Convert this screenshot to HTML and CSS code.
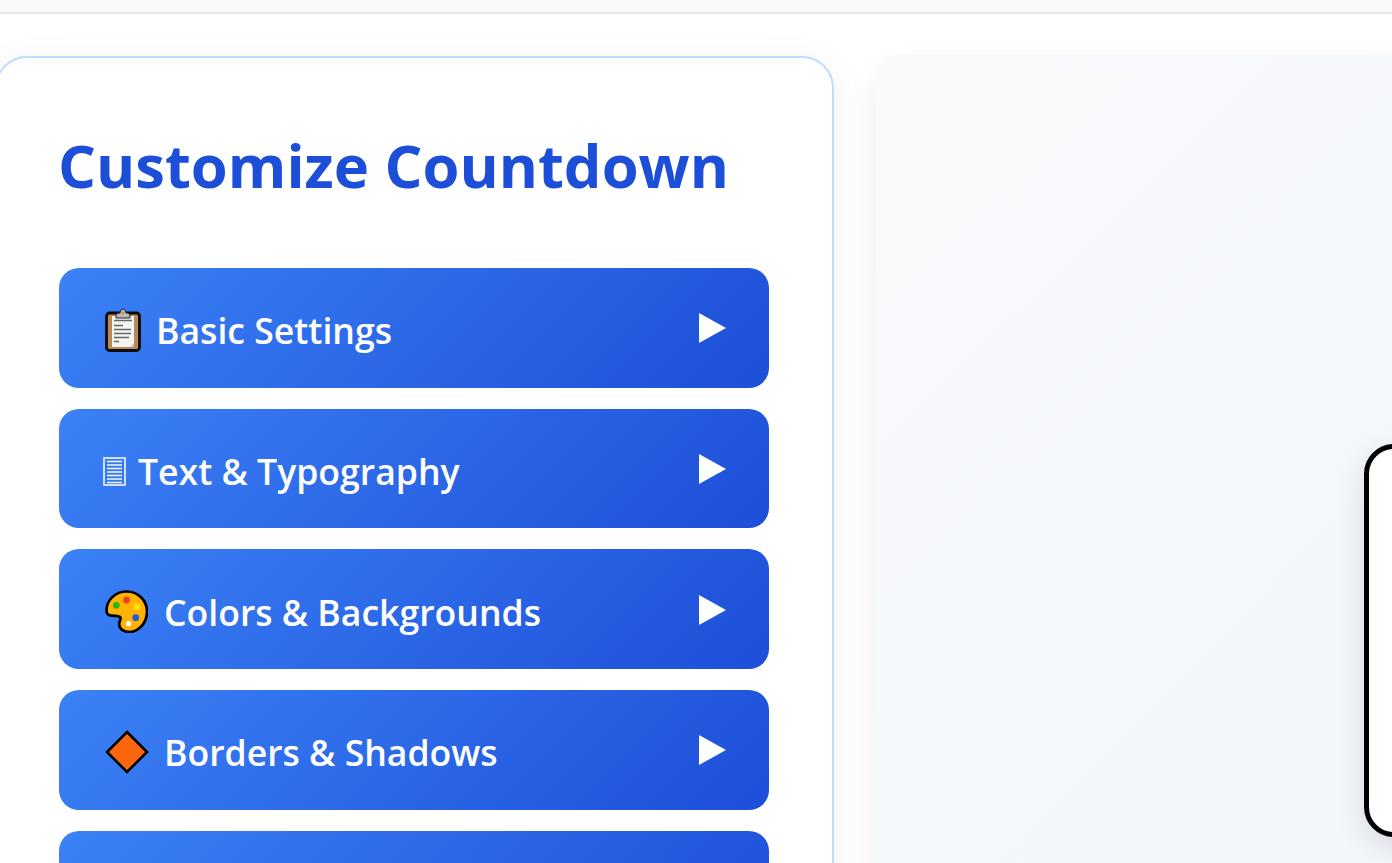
FILE: index.html
```html
<!DOCTYPE html>
<html lang="en">
<head>
<meta charset="utf-8">
<title>Customize Countdown</title>
<link rel="stylesheet" href="styles.css">
</head>
<body>
<div class="topbar"></div>
<main class="layout">
  <section class="panel">
    <h1 class="title">Customize Countdown</h1>
    <div class="accordion">
      <button class="acc">
        <span class="acc-label">
          <svg class="ic ic-clip" viewBox="0 0 36 44"><rect x="1.500" y="5" width="33" height="37.500" rx="3" fill="#b88a5a" stroke="#0a0a0a" stroke-width="2.800"/><rect x="7" y="8" width="22" height="31" fill="#f4f4f2"/><path d="M29 39v-4l-4 4z" fill="#c9c9c9"/><path d="M11 8c0-2.500 2-3 4-3 .5-2.500 1.500-4 3-4s2.500 1.500 3 4c2 0 4 .5 4 3v2H11z" fill="#b9b9b9" stroke="#222" stroke-width="1"/><circle cx="18" cy="5" r="1.300" fill="#d08a4a"/><path d="M9 12.500h18M9 17.500h9M9 21.500h17M9 25.500h17M9 29.500h15M9 33.500h5" stroke="#666" stroke-width="1.700" fill="none"/></svg>
          Basic Settings
        </span>
        <svg class="arrow" viewBox="0 0 27 30"><polygon points="0,0 27,15 0,30"/></svg>
      </button>
      <button class="acc">
        <span class="acc-label label-tight">
          <svg class="ic ic-doc" viewBox="0 0 23 29"><rect x="1" y="1" width="21" height="27" fill="none" stroke="#dfe9fc" stroke-width="1.800"/><path d="M4 4.500h15M4 8h15M4 11.500h15M4 15h15M4 18.500h15M4 22h15M4 25.500h15" stroke="#f2f6fe" stroke-width="1.700"/></svg>
          Text &amp; Typography
        </span>
        <svg class="arrow" viewBox="0 0 27 30"><polygon points="0,0 27,15 0,30"/></svg>
      </button>
      <button class="acc">
        <span class="acc-label label-pal">
          <svg class="ic ic-pal" viewBox="0 0 42 42"><path d="M21 1.500C32 1.500 41 10 41 21 41 32 33 41 24 41 17 41 13 37 14 32 15 28 17 26 12 25.500 6 25 1.500 25.500 1.500 20 1.500 10 10 1.500 21 1.500z" fill="#ffb300" stroke="#000" stroke-width="2.600"/><circle cx="11" cy="15" r="3.300" fill="#2fb314"/><circle cx="21" cy="10" r="3.300" fill="#f0401f"/><circle cx="31" cy="16.500" r="3.300" fill="#ffe000"/><circle cx="30" cy="27" r="3.300" fill="#1f5be0"/><circle cx="23" cy="33" r="2.600" fill="#fff"/></svg>
          Colors &amp; Backgrounds
        </span>
        <svg class="arrow" viewBox="0 0 27 30"><polygon points="0,0 27,15 0,30"/></svg>
      </button>
      <button class="acc">
        <span class="acc-label">
          <svg class="ic ic-dia" viewBox="0 0 44 44"><polygon points="22,2 42,22 22,42 2,22" fill="#fb660f" stroke="#000" stroke-width="2.600"/></svg>
          Borders &amp; Shadows
        </span>
        <svg class="arrow" viewBox="0 0 27 30"><polygon points="0,0 27,15 0,30"/></svg>
      </button>
      <button class="acc"></button>
    </div>
  </section>
  <section class="preview">
    <div class="frame"></div>
  </section>
</main>
</body>
</html>
```
FILE: styles.css
```css
html, body {
  margin: 0;
  height: 100%;
  overflow: hidden;
  background: #fff;
  font-family: "Open Sans", "Noto Sans", "Liberation Sans", sans-serif;
}
.topbar {
  height: 12px;
  background: #f9fafb;
  border-bottom: 2px solid #e5e7eb;
}
.layout {
  display: flex;
  align-items: flex-start;
  gap: 42px;
  margin-left: -5px;
  padding-top: 42px;
  width: 1500px;
}
.panel {
  flex: 0 0 839px;
  box-sizing: border-box;
  height: 1100px;
  background: #fff;
  border: 2px solid #bfdbfe;
  border-radius: 32px;
  padding: 63px 62px 62px;
  box-shadow: 0 8px 40px rgba(0, 0, 0, 0.06);
}
.title {
  margin: 0 0 59px -1px;
  font-size: 59.7px;
  line-height: 88px;
  font-weight: 700;
  color: #1d4ed8;
  white-space: nowrap;
}
.accordion {
  display: flex;
  flex-direction: column;
  gap: 21px;
}
.acc {
  display: flex;
  align-items: center;
  justify-content: space-between;
  width: 710px;
  height: 119.7px;
  padding: 0 43px 0 46px;
  border: 0;
  border-radius: 20px;
  background: linear-gradient(135deg, #3b82f6, #1d4ed8);
  color: #fff;
  font: inherit;
  font-size: 35.6px;
  font-weight: 600;
  flex: none;
}
.acc-label {
  display: flex;
  align-items: center;
  gap: 15px;
  margin-top: 5px;
}
.label-tight { gap: 12px; margin-left: -2px; }
.label-pal { gap: 16px; }
.ic { display: block; flex: none; }
.ic-clip { width: 36px; height: 44px; }
.ic-doc { width: 23px; height: 29px; }
.ic-pal { width: 43px; height: 43px; }
.ic-dia { width: 44px; height: 44px; }
.arrow {
  width: 27px;
  height: 30px;
  fill: #fff;
  margin-top: 1px;
  flex: none;
}
.preview {
  flex: 0 0 600px;
  height: 960px;
  box-sizing: border-box;
  padding: 390px 0 0 488px;
  margin-top: -2px;
  border-radius: 24px;
  background: linear-gradient(135deg, #f8fafc, #f1f5f9);
  box-shadow: 0 16px 32px rgba(0, 0, 0, 0.08);
}
.frame {
  box-sizing: border-box;
  width: 400px;
  height: 393px;
  background: #fff;
  border: 5px solid #000;
  border-radius: 30px;
  box-shadow: 0 10px 30px rgba(0, 0, 0, 0.12);
}
```
